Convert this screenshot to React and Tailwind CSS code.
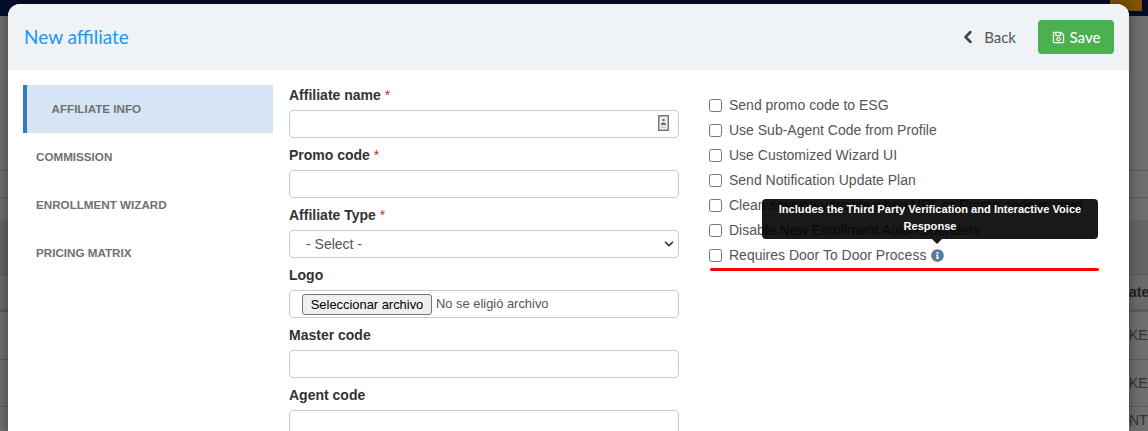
import React from "react";
import { FaInfoCircle, FaRegSave } from "react-icons/fa";
import { ChevronLeft, ChevronDown } from "lucide-react";

const heading = "font-['Lato',sans-serif]";

const tabs = ["Commission", "Enrollment Wizard", "Pricing Matrix"];

const options = [
  "Send promo code to ESG",
  "Use Sub-Agent Code from Profile",
  "Use Customized Wizard UI",
  "Send Notification Update Plan",
  "Clean session variable when URL or Promo code is used",
  "Disable New Enrollment Autoresponders",
];

const Field = ({ label, required, children }) => (
  <div className="h-[60px]">
    <label className="block h-[25px] text-[14px] leading-[20px] font-bold text-[#333]">
      {label}
      {required && <span className="font-normal text-[#a33]"> *</span>}
    </label>
    {children}
  </div>
);

const inputClass =
  "block h-[28px] w-full rounded-[4px] border border-[#ccc] bg-white px-3 text-[14px] text-[#555]";

const Backdrop = () => (
  <div className="h-[431px] overflow-hidden bg-[#6e6e6e]">
    <div className="flex h-[16px] justify-end bg-[#050c2b] pr-[6px]">
      <div className="h-[11px] w-[32px] bg-[#7f5500]" />
    </div>
    <div className="h-[155px] border-b border-[#5c5c5c]" />
    <div className="h-[27px] border-b border-[#5c5c5c]" />
    <div className="h-[22px] bg-[#6e6e6e]" />
    <div className="h-[55px] border-b border-[#5c5c5c] bg-[#656565]" />
    <div className="flex h-[37px] items-center justify-end border-b-[3px] border-[#5c5c5c] bg-[#6a6a6a] text-[14px] font-bold text-[#222]">
      <span className="w-[19px]">ate</span>
    </div>
    <div className="flex h-[48px] items-center justify-end border-b border-[#5c5c5c] text-[14px] text-[#333]">
      <span className="w-[19px]">KE</span>
    </div>
    <div className="flex h-[47px] items-center justify-end border-b border-[#5c5c5c] text-[14px] text-[#333]">
      <span className="w-[19px]">KE</span>
    </div>
    <div className="flex h-[24px] items-end justify-end text-[14px] text-[#333]">
      <span className="w-[19px]">NT</span>
    </div>
  </div>
);

export default function App() {
  return (
    <div className="relative h-[431px] w-[1148px] overflow-hidden font-['Liberation_Sans',Arial,sans-serif]">
      <Backdrop />

      {/* modal */}
      <div className="absolute left-[8px] top-[4px] h-[427px] w-[1121px] overflow-hidden rounded-t-[12px] bg-white shadow-[0_0_12px_rgba(0,0,0,0.45)]">
        <div className="flex h-[66px] items-center justify-between bg-[#eff2f6] pl-[16px] pr-[15px]">
          <h3 className={`${heading} text-[19px] text-[#2196f3]`}>New affiliate</h3>
          <div className="flex items-center">
            <button className={`${heading} flex items-center text-[15px] text-[#555]`}>
              <ChevronLeft size={20} strokeWidth={3} className="text-[#444]" />
              <span className="ml-[6px]">Back</span>
            </button>
            <button
              className={`${heading} ml-[22px] flex h-[34px] w-[76px] items-center justify-center gap-[5px] rounded-[4px] bg-[#4caf50] text-[15px] font-medium text-white`}
            >
              <FaRegSave size={13} />
              Save
            </button>
          </div>
        </div>

        <div className="flex pl-[15px] pt-[15px]">
          {/* side tabs */}
          <div className="w-[250px] shrink-0 text-[11.65px] font-bold uppercase text-[#707070]">
            <div className="flex h-[48px] items-center border-l-4 border-[#337ab7] bg-[#d6e5f5] pl-[24.5px]">
              Affiliate Info
            </div>
            {tabs.map((t) => (
              <div key={t} className="flex h-[48px] items-center pl-[13px]">
                {t}
              </div>
            ))}
          </div>

          {/* form */}
          <div className="ml-[16px] w-[390px] shrink-0">
            <Field label="Affiliate name" required>
              <div className="relative">
                <input className={inputClass} />
                <svg
                  className="absolute right-[10px] top-[5px]"
                  width="11"
                  height="16"
                  viewBox="0 0 11 16"
                  fill="none"
                >
                  <rect x="0.75" y="0.75" width="9.5" height="14.5" fill="#f2f2f2" stroke="#777" strokeWidth="1.5" />
                  <circle cx="5.5" cy="5" r="1.3" fill="#666" />
                  <path d="M3 10 C3 6.8 8 6.8 8 10 Z" fill="#666" />
                  <path d="M3 12h5" stroke="#aaa" />
                </svg>
              </div>
            </Field>
            <Field label="Promo code" required>
              <input className={inputClass} />
            </Field>
            <Field label="Affiliate Type" required>
              <div className="relative">
                <select className={`${inputClass} appearance-none pl-[16px] text-[13px]`} defaultValue="">
                  <option value="">- Select -</option>
                </select>
                <ChevronDown
                  size={14}
                  strokeWidth={3}
                  className="absolute right-[3px] top-[7px] text-[#333]"
                />
              </div>
            </Field>
            <Field label="Logo">
              <div className="flex h-[28px] items-center rounded-[4px] border border-[#ccc] bg-white pl-[12px] text-[#555]">
                <button className="h-[21px] w-[130px] rounded-[3px] border border-[#767676] bg-[#efefef] text-center text-[12.9px] leading-[19px] text-black">
                  Seleccionar archivo
                </button>
                <span className="ml-[4px] text-[12.9px]">No se eligió archivo</span>
              </div>
            </Field>
            <Field label="Master code">
              <input className={inputClass} />
            </Field>
            <Field label="Agent code">
              <input className={inputClass} />
            </Field>
          </div>

          {/* options */}
          <div className="ml-[30px] w-[390px] pt-[8px] text-[14px] text-[#555]">
            {options.map((o) => (
              <label key={o} className="flex h-[25px] items-center">
                <input type="checkbox" className="mr-[7px] h-[13px] w-[13px]" />
                {o}
              </label>
            ))}
            <div className="relative flex h-[25px] items-center">
              <input type="checkbox" className="mr-[7px] h-[13px] w-[13px]" />
              Requires Door To Door Process
              <FaInfoCircle size={13} className="ml-[5px] text-[#5b7b9a]" />
              <div className="absolute bottom-[29px] left-[53px] w-[336px] rounded-[4px] bg-black/90 px-[12px] pt-[2px] pb-[4px] text-center text-[11.1px] leading-[17px] font-bold text-white">
                Includes the Third Party Verification and Interactive Voice Response
                <div className="absolute left-[170px] top-full h-0 w-0 border-x-[5px] border-t-[5px] border-x-transparent border-t-black/90" />
              </div>
            </div>
            <div className="ml-[1px] h-[3px] w-[389px] rounded-full bg-[#f00]" />
          </div>
        </div>
      </div>
    </div>
  );
}
